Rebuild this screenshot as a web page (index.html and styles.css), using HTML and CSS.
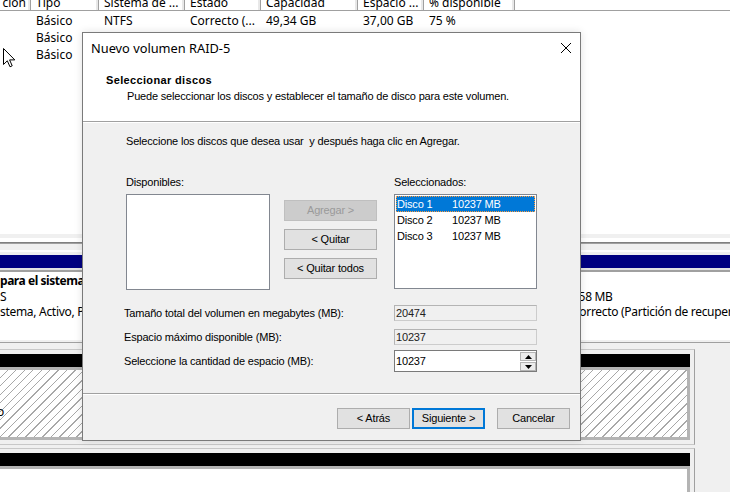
FILE: index.html
```html
<!DOCTYPE html>
<html lang="es">
<head>
<meta charset="utf-8">
<title>Nuevo volumen RAID-5</title>
<link rel="stylesheet" href="styles.css">
</head>
<body>
<div class="screen">
  <div class="lv-header">
    <div class="hc hc0"><span class="ht">ción</span></div>
    <div class="hc"><span class="ht">Tipo</span></div>
    <div class="hc"><span class="ht">Sistema de ...</span></div>
    <div class="hc"><span class="ht">Estado</span></div>
    <div class="hc"><span class="ht">Capacidad</span></div>
    <div class="hc"><span class="ht">Espacio ...</span></div>
    <div class="hc"><span class="ht">% disponible</span></div>
    <div class="hc hc-fill"></div>
  </div>
  <div class="lv-body">
    <div class="lv-row"><span></span><span>Básico</span><span>NTFS</span><span>Correcto (...</span><span>49,34 GB</span><span>37,00 GB</span><span>75 %</span><span></span></div>
    <div class="lv-row"><span></span><span>Básico</span><span></span><span></span><span></span><span></span><span></span><span></span></div>
    <div class="lv-row"><span></span><span>Básico</span><span></span><span></span><span></span><span></span><span></span><span></span></div>
  </div>

  <div class="splitter">
    <div class="st st-light4"></div>
    <div class="st st-white4"></div>
    <div class="st st-dark"></div>
    <div class="st st-mid"></div>
    <div class="st st-light6"></div>
    <div class="st st-white2"></div>
    <div class="st st-light3"></div>
  </div>

  <div class="disk0">
    <div class="d0-bar"></div>
    <div class="d0-edge"></div>
    <div class="d0-parts">
      <div class="part part-sys">
        <div class="pname">para el sistema</div>
        <div>S</div>
        <div>stema, Activo, P</div>
      </div>
      <div class="part part-main"></div>
      <div class="part part-rec">
        <div class="pname">&nbsp;</div>
        <div>558 MB</div>
        <div>Correcto (Partición de recuperación)</div>
      </div>
    </div>
  </div>

  <div class="disks">
    <div class="st st-light2"></div>
    <div class="st st-rule"></div>
    <div class="st st-light6"></div>
    <div class="disk-row">
      <div class="dbox dbox1">
        <div class="ubar"></div>
        <div class="hatch"><span class="htext">o</span></div>
      </div>
      <div class="dfill"></div>
    </div>
    <div class="disk-row disk-row2">
      <div class="dbox dbox2">
        <div class="ubar"></div>
        <div class="whitepart"></div>
      </div>
      <div class="dfill"></div>
    </div>
  </div>
</div>

<svg class="cursor" width="13" height="20" viewBox="0 0 13 20">
  <path d="M0.5 0.5 L0.5 16.5 L4.3 12.8 L7 18.8 L9.2 17.8 L6.6 11.9 L11.8 11.9 Z" fill="#fff" stroke="#000" stroke-width="1" stroke-linejoin="miter"/>
</svg>

<div class="dialog">
  <div class="titlebar">
    <span class="title">Nuevo volumen RAID-5</span>
    <svg class="close" width="10" height="10" viewBox="0 0 10 10"><path d="M0 0 L10 10 M10 0 L0 10" stroke="#000" stroke-width="1"/></svg>
  </div>
  <div class="wiz-header">
    <div class="wh-title">Seleccionar discos</div>
    <div class="wh-sub">Puede seleccionar los discos y establecer el tamaño de disco para este volumen.</div>
  </div>
  <div class="wiz-body">
    <div class="instr">Seleccione los discos que desea usar&nbsp; y después haga clic en Agregar.</div>
    <div class="pick">
      <div class="pcol pcol-left">
        <div class="plabel">Disponibles:</div>
        <div class="listbox lb-left"></div>
      </div>
      <div class="pcol pcol-mid">
        <button class="btn btn-disabled" disabled>Agregar &gt;</button>
        <button class="btn">&lt; Quitar</button>
        <button class="btn">&lt; Quitar todos</button>
      </div>
      <div class="pcol pcol-right">
        <div class="plabel">Seleccionados:</div>
        <div class="listbox lb-right">
          <div class="lbi lbi-sel"><span class="dn">Disco 1</span><span>10237 MB</span></div>
          <div class="lbi"><span class="dn">Disco 2</span><span>10237 MB</span></div>
          <div class="lbi"><span class="dn">Disco 3</span><span>10237 MB</span></div>
        </div>
      </div>
    </div>
    <div class="fields">
      <div class="frow frow1">
        <span class="flabel">Tamaño total del volumen en megabytes (MB):</span>
        <span class="ro">20474</span>
      </div>
      <div class="frow frow2">
        <span class="flabel">Espacio máximo disponible (MB):</span>
        <span class="ro">10237</span>
      </div>
      <div class="frow frow3">
        <span class="flabel flabel-tall">Seleccione la cantidad de espacio (MB):</span>
        <div class="spin">
          <span class="spin-val">10237</span>
          <div class="spin-btns">
            <span class="sb"><svg width="7" height="4" viewBox="0 0 7 4"><path d="M0 4 L3.5 0 L7 4 Z" fill="#000"/></svg></span>
            <span class="sb"><svg width="7" height="4" viewBox="0 0 7 4"><path d="M0 0 L3.5 4 L7 0 Z" fill="#000"/></svg></span>
          </div>
        </div>
      </div>
    </div>
  </div>
  <div class="wiz-footer">
    <div class="wiz-sep"></div>
    <div class="wiz-buttons">
      <button class="btn btn-back">&lt; Atrás</button>
      <button class="btn btn-next">Siguiente &gt;</button>
      <button class="btn">Cancelar</button>
    </div>
  </div>
</div>
</body>
</html>
```

FILE: styles.css
```css
* { box-sizing: border-box; }
html, body { margin: 0; padding: 0; }
body {
  width: 730px;
  height: 492px;
  overflow: hidden;
  position: relative;
  background: #ffffff;
  color: #000;
  font-family: "Noto Sans", "Open Sans", sans-serif;
  font-size: 12px;
}

/* ---------- background: list view ---------- */
.screen { width: 730px; height: 492px; overflow: hidden; }

.lv-header {
  height: 11px;
  display: grid;
  grid-template-columns: 31px 68px 86px 76px 97px 66px 91px 1fr;
  border-bottom: 1px solid #a0a0a0;
  overflow: hidden;
  background: #fff;
}
.hc {
  overflow: hidden;
  white-space: nowrap;
  padding-left: 5px;
  border-right: 1px solid #a0a0a0;
  box-shadow: inset -2px 0 0 #e8e8e8;
}
.hc0 { display: flex; justify-content: flex-end; padding-left: 0; padding-right: 4px; }
.hc-fill { border-right: none; box-shadow: none; }
.ht { display: block; line-height: 17px; margin-top: -6px; }

.lv-body { height: 223px; padding-top: 1px; background: #fff; }
.lv-row {
  display: grid;
  grid-template-columns: 31px 68px 86px 76px 97px 66px 91px 1fr;
  height: 17px;
  line-height: 17px;
  white-space: nowrap;
}
.lv-row span { padding-left: 5px; overflow: hidden; }

/* ---------- background: splitter stripes ---------- */
.st { width: 100%; }
.st-light4 { height: 4px; background: #f0f0f0; }
.st-white4 { height: 4px; background: #fff; }
.st-dark { height: 1px; background: #808080; }
.st-mid { height: 1px; background: #a0a0a0; }
.st-light6 { height: 6px; background: #f0f0f0; }
.st-white2 { height: 2px; background: #fff; }
.st-light3 { height: 3px; background: #f0f0f0; }
.st-light2 { height: 2px; background: #f0f0f0; }
.st-rule { height: 1px; background: #a0a0a0; }

/* ---------- disk 0 ---------- */
.d0-bar { height: 13px; background: #000080; }
.d0-edge { height: 4px; border-top: 2px solid #e3e3e3; border-bottom: 2px solid #a0a0a0; }
.d0-parts { height: 68px; display: flex; background: #fff; }
.part {
  padding-top: 1px;
  line-height: 15.5px;
  white-space: nowrap;
  overflow: hidden;
  letter-spacing: -0.3px;
}
.pname { font-weight: bold; letter-spacing: -0.45px; }
.part-sys { width: 82px; }
.part-main { width: 490px; }
.part-rec { flex: 1; }

/* ---------- disks 1, 2 ---------- */
.disks { background: #f0f0f0; }
.disk-row { display: flex; height: 96px; }
.disk-row2 { margin-top: 3px; height: 50px; }
.dbox {
  width: 695px;
  border-top: 1px solid #c8c8c8;
  border-right: 1px solid #a0a0a0;
  border-bottom: 1px solid #c8c8c8;
  padding: 4px 4px 4px 0;
  box-shadow: 1px 0 0 #e3e3e3;
}
.dbox2 { border-bottom: none; padding-bottom: 0; }
.ubar { height: 13px; background: #000; }
.hatch {
  height: 73px;
  border: 3px solid #b4b4b4;
  border-left: none;
  background: repeating-linear-gradient(135deg, #ffffff 0 5px, #a8a8a8 5px 6px);
  padding-top: 34px;
  line-height: 15px;
  overflow: hidden;
}
.htext { display: block; margin-left: -3px; color: #000; }
.whitepart {
  height: 40px;
  border-top: 3px solid #b4b4b4;
  border-right: 3px solid #b4b4b4;
  background: #fff;
}
.dfill { flex: 1; background: #f0f0f0; }

/* ---------- cursor overlay ---------- */
.cursor { position: absolute; left: 3px; top: 48px; }

/* ---------- dialog ---------- */
.dialog {
  position: absolute;
  left: 82px;
  top: 32px;
  width: 499px;
  height: 409px;
  border: 1px solid #7a7a7a;
  background: #f0f0f0;
  display: flex;
  flex-direction: column;
  font-family: "Liberation Sans", Arial, sans-serif;
  font-size: 11px;
  letter-spacing: -0.18px;
  box-shadow: 0 0 8px rgba(0,0,0,0.12);
}
.titlebar {
  height: 30px;
  flex: none;
  background: #fff;
  display: flex;
  align-items: center;
  justify-content: space-between;
  padding: 0 9px 0 8px;
}
.title {
  font-family: "Noto Sans", "Open Sans", sans-serif;
  font-size: 12.8px;
  letter-spacing: 0;
  line-height: 30px;
}
.close { display: block; }

.wiz-header {
  height: 59px;
  flex: none;
  background: #fff;
  border-bottom: 1px solid #a0a0a0;
  padding: 8.5px 0 0 23px;
}
.wh-title { font-weight: bold; line-height: 16px; letter-spacing: 0.35px; }
.wh-sub { line-height: 16px; padding-left: 21px; }

.wiz-body {
  flex: 1;
  border-top: 1px solid #fff;
  padding: 12px 0 0 43px;
}
.instr { line-height: 13px; }

.pick { display: flex; margin-top: 28px; }
.pcol-left { width: 144px; }
.pcol-mid {
  width: 93px;
  margin-left: 14px;
  padding-top: 24px;
  display: flex;
  flex-direction: column;
  gap: 8px;
}
.pcol-right { width: 143px; margin-left: 17px; }
.plabel { line-height: 13px; margin-bottom: 5px; }
.listbox { background: #fff; border: 1px solid #828790; }
.lb-left { height: 96px; }
.lb-right { height: 95px; padding: 1px 1px; }
.lbi {
  height: 16px;
  line-height: 16px;
  padding-left: 1px;
  white-space: nowrap;
}
.lbi-sel {
  background: #0078d7;
  color: #fff;
  outline: 1px dotted #ff9a3c;
  outline-offset: -1px;
}
.dn { display: inline-block; width: 55px; }

.btn {
  width: 93px;
  height: 21px;
  padding: 0;
  margin: 0;
  background: #e1e1e1;
  border: 1px solid #adadad;
  font-family: "Liberation Sans", Arial, sans-serif;
  font-size: 11px;
  letter-spacing: -0.18px;
  line-height: 19px;
  color: #000;
  text-align: center;
}
.btn-disabled { background: #cccccc; border-color: #bfbfbf; color: #9a9a9a; }

.fields { margin-top: 15px; margin-left: -2px; }
.frow { display: flex; }
.frow2 { margin-top: 8px; }
.frow3 { margin-top: 5px; }
.flabel { width: 270px; line-height: 16px; }
.flabel-tall { line-height: 22px; }
.ro {
  width: 143px;
  height: 16px;
  background: #f0f0f0;
  border: 1px solid #cccccc;
  border-top-color: #b4b4b4;
  border-left-color: #b4b4b4;
  padding: 1px 0 0 1px;
  line-height: 13px;
  color: #222;
}
.spin {
  width: 143px;
  height: 22px;
  border: 1px solid #7a7a7a;
  background: #fff;
  display: flex;
}
.spin-val { flex: 1; padding-left: 1px; line-height: 20px; }
.spin-btns {
  width: 16px;
  padding-top: 1px;
  display: flex;
  flex-direction: column;
  gap: 1px;
}
.sb {
  height: 9px;
  background: #ececec;
  border: 1px solid #b4b4b4;
  display: flex;
  align-items: center;
  justify-content: center;
}
.sb svg { display: block; }

.wiz-footer { flex: none; }
.wiz-sep { height: 2px; border-top: 1px solid #a0a0a0; border-bottom: 1px solid #fff; }
.wiz-buttons {
  display: flex;
  justify-content: flex-end;
  padding: 13px 10px 11px 0;
}
.wiz-buttons .btn { width: 73px; }
.btn-back { margin-right: 2px; }
.btn-next { margin-right: 12px; border: 2px solid #0078d7; line-height: 17px; }
```
